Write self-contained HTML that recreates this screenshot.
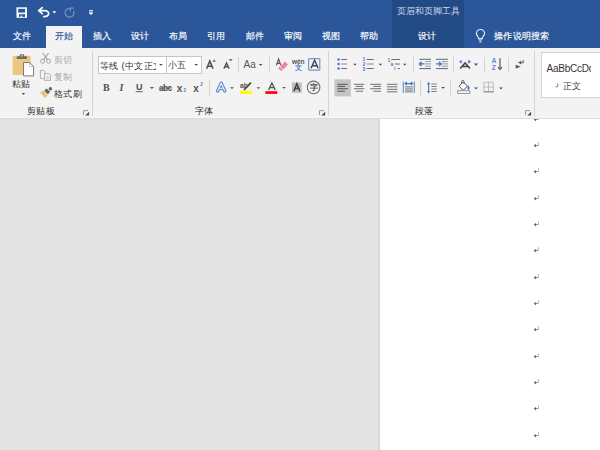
<!DOCTYPE html>
<html><head><meta charset="utf-8">
<style>
html,body{margin:0;padding:0;}
body{width:600px;height:450px;overflow:hidden;position:relative;background:#E4E4E4;font-family:"Liberation Sans",sans-serif;}
.abs{position:absolute;}
.t{position:absolute;white-space:nowrap;line-height:1;font-size:9.4px;letter-spacing:0.3px;font-weight:500;}
.w{-webkit-text-stroke:0.15px currentColor;}
.w{color:#fff;}
#top{left:0;top:0;width:600px;height:48px;background:#2B579A;}
#ctx{left:392px;top:0;width:71.5px;height:48px;background:#224A85;}
#acttab{left:46px;top:26px;width:36px;height:22px;background:#F3F3F3;}
#ribbon{left:0;top:48px;width:600px;height:69px;background:#F3F3F3;}
#rline{left:0;top:117px;width:600px;height:1px;background:#F6F6F6;}
#rline2{left:0;top:118px;width:600px;height:1px;background:#DCDCDC;}
#rline3{left:0;top:119px;width:380px;height:1px;background:#E0E0E0;}
#page{left:380px;top:119px;width:220px;height:331px;background:#fff;}
#pedge{left:378px;top:119px;width:2px;height:331px;background:#D9D9D9;}
.sep{position:absolute;width:1px;background:#D4D4D4;}
.dis{color:#A8A8A8;}
.dk{color:#333;}
.ret{position:absolute;left:533px;width:7px;height:6px;}
</style></head>
<body>
<div id="top" class="abs"></div>
<div id="ctx" class="abs"></div>
<div id="acttab" class="abs"></div>
<div id="ribbon" class="abs"></div>
<div id="rline" class="abs"></div>
<div id="rline2" class="abs"></div>
<div id="rline3" class="abs"></div>
<div id="pedge" class="abs"></div>
<div id="page" class="abs"></div>

<span class="t" style="left:396.5px;top:6.5px;font-size:9px;letter-spacing:0;color:#D0D8E6;">页眉和页脚工具</span>

<span class="t w" style="left:13px;top:31px;">文件</span>
<span class="t" style="left:55px;top:31px;color:#2B579A;-webkit-text-stroke:0.15px currentColor;">开始</span>
<span class="t w" style="left:93px;top:31px;">插入</span>
<span class="t w" style="left:131px;top:31px;">设计</span>
<span class="t w" style="left:169px;top:31px;">布局</span>
<span class="t w" style="left:207px;top:31px;">引用</span>
<span class="t w" style="left:246px;top:31px;">邮件</span>
<span class="t w" style="left:284px;top:31px;">审阅</span>
<span class="t w" style="left:322px;top:31px;">视图</span>
<span class="t w" style="left:360px;top:31px;">帮助</span>
<span class="t w" style="left:418px;top:31px;">设计</span>
<span class="t w" style="left:494px;top:31px;">操作说明搜索</span>

<span class="t dk" style="left:12px;top:79px;">粘贴</span>
<span class="t dis" style="left:54px;top:55px;">剪切</span>
<span class="t dis" style="left:54px;top:72px;">复制</span>
<span class="t dk" style="left:54px;top:89px;">格式刷</span>
<span class="t" style="left:27px;top:106px;color:#2A2A2A;">剪贴板</span>

<div class="abs" style="left:98px;top:56px;width:69px;height:18px;background:#fff;box-sizing:border-box;border:1px solid #C6C6C6;"></div>
<div class="abs" style="left:166px;top:56px;width:36px;height:18px;background:#fff;box-sizing:border-box;border:1px solid #C6C6C6;"></div>
<div class="abs" style="left:99px;top:57px;width:57px;height:16px;overflow:hidden;"><span class="t dk" style="left:1px;top:4px;">等线 (中文正文)</span></div>
<span class="t dk" style="left:168px;top:60px;">小五</span>
<span class="t" style="left:243.6px;top:59.5px;font-family:'Liberation Sans';font-size:10px;font-weight:normal;letter-spacing:0;color:#555;">Aa</span>
<span class="t" style="left:294.6px;top:63.6px;font-size:7px;letter-spacing:0;font-weight:bold;color:#3E7CC4;">文</span>
<span class="t" style="left:103px;top:83px;font-family:'Liberation Serif';font-weight:bold;font-size:10px;color:#505050;letter-spacing:0;">B</span>
<span class="t" style="left:119.5px;top:83px;font-family:'Liberation Serif';font-style:italic;font-weight:bold;font-size:10px;color:#555;letter-spacing:0;">I</span>
<span class="t" style="left:136px;top:83px;font-family:'Liberation Sans';font-weight:bold;font-size:9px;color:#505050;letter-spacing:0;">U</span>
<span class="t" style="left:159px;top:83.5px;font-family:'Liberation Sans';font-weight:bold;font-size:8.4px;color:#4A4A4A;letter-spacing:-0.6px;-webkit-text-stroke:0;">abc</span>
<span class="t" style="left:176.8px;top:83.6px;font-family:'Liberation Sans';font-weight:bold;font-size:10px;letter-spacing:0;color:#555;">x</span>
<span class="t" style="left:183.4px;top:89.2px;font-family:'Liberation Sans';font-weight:bold;font-size:4.6px;letter-spacing:0;color:#3E7CC4;">2</span>
<span class="t" style="left:193.2px;top:83.6px;font-family:'Liberation Sans';font-weight:bold;font-size:10px;letter-spacing:0;color:#555;">x</span>
<span class="t" style="left:200.2px;top:82.6px;font-family:'Liberation Sans';font-weight:bold;font-size:4.6px;letter-spacing:0;color:#3E7CC4;">2</span>
<span class="t" style="left:240px;top:82px;font-family:'Liberation Sans';font-size:7px;font-weight:bold;letter-spacing:-0.2px;color:#555;">ab</span>
<span class="t" style="left:309.6px;top:84.4px;font-size:8px;letter-spacing:0;font-weight:bold;color:#4A4A4A;">字</span>
<span class="t" style="left:195px;top:106px;color:#2A2A2A;">字体</span>

<span class="t" style="left:415px;top:106px;color:#2A2A2A;">段落</span>

<div class="abs" style="left:541px;top:52px;width:70px;height:46px;background:#fff;box-sizing:border-box;border:1px solid #D4D4D4;"></div>
<div class="abs" style="left:542px;top:53px;width:49px;height:30px;overflow:hidden;"><span class="t dk" style="left:4.5px;top:11px;font-size:10px;letter-spacing:-0.25px;font-weight:normal;color:#333;">AaBbCcDd</span></div>
<span class="t" style="left:563px;top:81px;color:#444;">正文</span>

<div class="sep" style="left:92px;top:51px;height:65px;"></div>
<div class="sep" style="left:328px;top:51px;height:65px;"></div>
<div class="sep" style="left:534px;top:51px;height:65px;"></div>
<div class="sep" style="left:238px;top:57px;height:15px;"></div>
<div class="sep" style="left:269px;top:57px;height:15px;"></div>
<div class="sep" style="left:209px;top:80px;height:16px;"></div>
<div class="sep" style="left:413px;top:57px;height:15px;"></div>
<div class="sep" style="left:453px;top:57px;height:15px;"></div>
<div class="sep" style="left:484px;top:57px;height:15px;"></div>
<div class="sep" style="left:508px;top:57px;height:15px;"></div>
<div class="sep" style="left:420px;top:80px;height:16px;"></div>
<div class="sep" style="left:450px;top:80px;height:16px;"></div>
<svg class="abs" style="left:0;top:0;" width="600" height="450" viewBox="0 0 600 450">
<!-- QAT save -->
<rect x="16.5" y="7.4" width="10.5" height="10.4" fill="#fff"/>
<rect x="16.5" y="7.4" width="10.5" height="1.2" fill="#C9D3E4"/>
<rect x="18.2" y="9" width="6.9" height="3.6" fill="#2B579A"/>
<rect x="19" y="14.2" width="6" height="2.7" fill="#2B579A"/>
<rect x="20.6" y="15.6" width="1.6" height="1.4" fill="#fff"/>
<!-- undo -->
<path d="M42.2,7.6 L38.7,10.6 L42.2,13.6 M38.7,10.6 H44.5 A4.2,3 0 0 1 44.5,16.6 H43.8" fill="none" stroke="#fff" stroke-width="1.7" stroke-linejoin="round" stroke-linecap="round"/>
<path d="M52.3,11.2 H56.4 L54.35,13.4 Z" fill="#fff"/>
<!-- redo dim -->
<path d="M70.3,8.4 A4.4,4.4 0 1 0 73.6,11" fill="none" stroke="#7590BD" stroke-width="1.3"/>
<path d="M70.4,11.6 V8.2 H74.1" fill="none" stroke="#7590BD" stroke-width="1.3"/>
<!-- customize -->
<rect x="89" y="10" width="4" height="1" fill="#C9D3E4"/>
<rect x="89" y="11.6" width="4" height="1" fill="#fff"/>
<path d="M89,13 H93 L91,15.1 Z" fill="#fff"/>
<!-- lightbulb -->
<path d="M478.6,38.6 C478.6,36.6 476.4,35.3 476.4,33.6 A4.1,4.1 0 1 1 484.6,33.6 C484.6,35.3 482.3,36.6 482.3,38.6 Z" fill="none" stroke="#E2E8F2" stroke-width="1.2"/>
<path d="M478.8,40 H482 M479.4,41.9 H481.4" fill="none" stroke="#E2E8F2" stroke-width="1.2"/>

<!-- paste icon -->
<rect x="12.7" y="55.7" width="18" height="19.3" rx="1" fill="#EBC67F"/>
<rect x="16.7" y="56.3" width="10.3" height="2.8" rx="0.8" fill="#6E6E6E"/>
<path d="M19.3,56.8 L20.2,54.2 H23.6 L24.5,56.8 Z" fill="#6E6E6E"/>
<rect x="21.2" y="55.2" width="1.4" height="1.2" fill="#E8E8E8"/>
<path d="M23.5,62.5 H29.6 L33.6,66.5 V75.9 H23.5 Z" fill="#fff" stroke="#7A7A7A" stroke-width="1"/>
<path d="M29.6,62.5 V66.5 H33.6" fill="none" stroke="#B0B0B0" stroke-width="0.7"/>
<path d="M21.6,93 H25.2 L23.4,95 Z" fill="#555"/>
<!-- scissors -->
<path d="M42.6,53 L47.6,59.6 M48.6,53 L43.6,59.6" fill="none" stroke="#A3A3A3" stroke-width="1.1"/>
<circle cx="42.6" cy="61.2" r="2" fill="none" stroke="#A3A3A3" stroke-width="1"/>
<circle cx="48.6" cy="61.2" r="2" fill="none" stroke="#A3A3A3" stroke-width="1"/>
<!-- copy -->
<path d="M40.4,70.4 H43.6 L45,71.8 V78.4 H40.4 Z" fill="#F7F4F7" stroke="#A8A8A8" stroke-width="0.9"/>
<path d="M44.6,73.6 H48.8 L50.4,75.2 V80.4 H44.6 Z" fill="#F7F4F7" stroke="#A8A8A8" stroke-width="0.9"/>
<path d="M46,76.6 H48.6 M46,78.6 H49" stroke="#C0B8C0" stroke-width="0.8"/>
<!-- format painter -->
<path d="M40,92.4 L43.6,90.6 L47.6,95.4 L45,98 Z" fill="#EBC27A"/>
<path d="M44.2,90.8 L46.6,88.6 L50.2,91.8 L47.8,94.2 Z" fill="#626262"/>
<circle cx="50.4" cy="88.8" r="1.7" fill="#626262"/>
<!-- launchers -->
<path d="M83.5,115 V110.6 H88.0" fill="none" stroke="#9A9A9A" stroke-width="1"/>
<path d="M89.1,111.8 V115.6 H85.3 Z" fill="#4A4A4A"/>
<path d="M319.5,115 V110.6 H324.0" fill="none" stroke="#9A9A9A" stroke-width="1"/>
<path d="M325.1,111.8 V115.6 H321.3 Z" fill="#4A4A4A"/>
<path d="M525.5,115 V110.6 H530.0" fill="none" stroke="#9A9A9A" stroke-width="1"/>
<path d="M531.1,111.8 V115.6 H527.3 Z" fill="#4A4A4A"/>
<!-- combo carets -->
<path d="M159.2,64 H162.8 L161,65.8 Z" fill="#444"/>
<path d="M194.4,64 H198 L196.2,65.8 Z" fill="#444"/>

<!-- grow / shrink font -->
<path d="M206.6,68.7 L209.8,61 L213,68.7 M207.8,66.3 H211.8" fill="none" stroke="#505050" stroke-width="1.6"/>
<path d="M212.3,61.7 L214.15,59.3 L216,61.7 Z" fill="#3E7CC4"/>
<path d="M223.9,68.7 L226.5,63 L229.1,68.7 M224.9,66.8 H228.1" fill="none" stroke="#505050" stroke-width="1.4"/>
<path d="M228.7,59 H232.7 L230.7,61.4 Z" fill="#3E7CC4"/>
<!-- Aa caret -->
<path d="M258.8,64 H262.5 L260.65,65.8 Z" fill="#444"/>
<!-- clear formatting -->
<path d="M276.4,65.3 L278.6,59 L280.8,65.3 M277.2,63.4 H280" fill="none" stroke="#555" stroke-width="1.1"/>
<path d="M280.2,66.4 L285,61.6 L288,64.6 L283.2,69.4 Z" fill="#E8869C"/>
<path d="M278.2,68.2 L279.6,66.8 L282.6,69.8 L281.2,71.2 Z" fill="#E8869C"/>
<!-- wen -->
<text x="292" y="63.8" font-family="Liberation Sans" font-size="6.6" font-weight="bold" fill="#555" letter-spacing="-0.2">wén</text>
<!-- char border -->
<rect x="308.6" y="58.6" width="11.2" height="11.6" fill="none" stroke="#6B9BD2" stroke-width="1.2" rx="0.6"/>
<path d="M311,68.2 L314.6,60.2 L318.2,68.2 M312.2,65.7 H317" fill="none" stroke="#444" stroke-width="1.4"/>

<!-- row 2 -->
<rect x="135.7" y="91" width="7" height="1.2" fill="#777"/>
<rect x="158.8" y="87.6" width="12.6" height="0.9" fill="#666"/>
<path d="M149.8,87 H154 L151.9,89 Z" fill="#555"/>
<!-- text effects -->
<path d="M217.6,91 L221.2,83.2 L224.8,91 M218.9,88.2 H223.5" fill="none" stroke="#5B8FD0" stroke-width="3.4" stroke-linejoin="round" stroke-linecap="round"/>
<path d="M217.6,91 L221.2,83.2 L224.8,91 M218.9,88.2 H223.5" fill="none" stroke="#F3F3F3" stroke-width="1.1" stroke-linejoin="round" stroke-linecap="round"/>
<circle cx="221.2" cy="86.6" r="0.7" fill="#5B8FD0"/>
<path d="M230,87.3 H234 L232,89 Z" fill="#555"/>
<!-- highlighter -->
<rect x="240" y="90.8" width="12.2" height="3.2" fill="#FFFF00"/>
<path d="M244,89.8 L251,82.6" stroke="#505050" stroke-width="1.9"/>
<path d="M256.6,87.3 H260.3 L258.45,89 Z" fill="#555"/>
<!-- font color -->
<path d="M268.6,90 L271.9,83 L275.2,90 M269.8,87.6 H274" fill="none" stroke="#505050" stroke-width="1.3"/>
<rect x="265.4" y="91.2" width="11.9" height="2.7" fill="#FF0000"/>
<path d="M282.2,87 H286 L284.1,88.8 Z" fill="#555"/>
<!-- shading A -->
<rect x="292" y="82.5" width="9.7" height="10.3" fill="#BFBFBF"/>
<path d="M293.8,91.2 L296.85,83.8 L299.9,91.2 M295,88.6 H298.7" fill="none" stroke="#404040" stroke-width="1.5"/>
<!-- enclosed char -->
<circle cx="313.6" cy="87.4" r="6.3" fill="none" stroke="#6A6A6A" stroke-width="1.1"/>

<!-- paragraph row 1 -->
<g fill="#4A7EBF"><circle cx="338.6" cy="59.5" r="1.3"/><circle cx="338.6" cy="64" r="1.3"/><circle cx="338.6" cy="68.5" r="1.3"/></g>
<path d="M341.2,59.5 H347 M341.2,68.5 H347" stroke="#6A6A6A" stroke-width="1.1"/>
<path d="M341.2,64 H347" stroke="#8F8F8F" stroke-width="1.1"/>
<path d="M353.3,63.7 H356.7 L355,65.4 Z" fill="#444"/>
<path d="M366.7,59.5 H373.6 M366.7,68.5 H373.6" stroke="#6A6A6A" stroke-width="1.1"/>
<path d="M366.7,64 H373.6" stroke="#8F8F8F" stroke-width="1.1"/>
<g font-family="Liberation Sans" font-size="5" font-weight="bold" fill="#4A7EBF"><text x="362.6" y="61.4">1</text><text x="362.6" y="66">2</text><text x="362.6" y="70.6">3</text></g>
<path d="M378.7,63.7 H382.3 L380.5,65.4 Z" fill="#444"/>
<g font-family="Liberation Sans" font-size="5" font-weight="bold" fill="#4A7EBF"><text x="387.4" y="61.8">1</text><text x="390.4" y="65.6">a</text><text x="394" y="70.4">i</text></g>
<path d="M391.4,59.5 H400 M395,64 H399.8 M397.6,68.5 H399.8" stroke="#6A6A6A" stroke-width="1.1"/>
<path d="M403,63.7 H406.4 L404.7,65.4 Z" fill="#444"/>
<!-- indent -->
<path d="M419.3,59.3 H431 M419.3,68.6 H431" stroke="#666" stroke-width="1"/>
<path d="M425.2,61.6 H431 M425.2,63.9 H431 M425.2,66.2 H431" stroke="#9A9A9A" stroke-width="1"/>
<path d="M419.4,63.9 H424.6 M421.6,61.8 L419.4,63.9 L421.6,66" fill="none" stroke="#3E7CC4" stroke-width="1.4"/>
<path d="M435.9,59.3 H447.9 M435.9,68.6 H447.9" stroke="#666" stroke-width="1"/>
<path d="M442,61.6 H447.9 M442,63.9 H447.9 M442,66.2 H447.9" stroke="#9A9A9A" stroke-width="1"/>
<path d="M436,63.9 H441.2 M439,61.8 L441.2,63.9 L439,66" fill="none" stroke="#3E7CC4" stroke-width="1.4"/>
<!-- asian layout -->
<path d="M460.2,68.6 L465.1,62.9 L470,68.6 M461.8,66.5 H468.4" fill="none" stroke="#444" stroke-width="1.5"/>
<path d="M459,61.8 L461.8,59.8 L461.8,63.8 Z M462.6,61.8 L461.4,60.6 V63 Z" fill="#3E7CC4"/>
<path d="M471,61.8 L468.2,59.8 L468.2,63.8 Z" fill="#3E7CC4"/>
<path d="M474,63.4 H478 L476,65.8 Z" fill="#444"/>
<!-- sort -->
<text x="491.6" y="63.4" font-family="Liberation Sans" font-size="6.8" font-weight="bold" fill="#5B8FD0">A</text>
<text x="491.8" y="69.7" font-family="Liberation Sans" font-size="6.8" font-weight="bold" fill="#9B6BC8">Z</text>
<path d="M500,58.2 V69" stroke="#555" stroke-width="1.2"/>
<path d="M498,67 L500,69.6 L502,67" fill="none" stroke="#555" stroke-width="1.2"/>
<!-- show marks -->
<path d="M523.2,60 V62.6 H520" fill="none" stroke="#777" stroke-width="1.2"/>
<path d="M521.2,60.7 L518.1,62.6 L521.2,64.4 Z" fill="#555"/>
<path d="M515.7,64.8 L520.6,66.7 L515.7,68.6 Z" fill="#555"/>
<!-- paragraph row 2 -->
<rect x="334.5" y="79.3" width="16.3" height="17.1" fill="#C5C5C5"/>
<path d="M337.4,84.3 H347.8 M337.4,88.7 H347.8" stroke="#555" stroke-width="1"/>
<path d="M337.4,86.4 H345 M337.4,91.2 H345" stroke="#555" stroke-width="1"/>
<path d="M353.8,84.3 H364.3 M353.8,88.7 H364.3" stroke="#707070" stroke-width="1"/>
<path d="M355.6,86.4 H363 M355.6,91.2 H363" stroke="#707070" stroke-width="1"/>
<path d="M370.2,84.3 H381 M370.2,88.7 H381" stroke="#707070" stroke-width="1"/>
<path d="M373.3,86.4 H381 M373.3,91.2 H381" stroke="#707070" stroke-width="1"/>
<path d="M386.9,84.3 H397.4 M386.9,86.8 H397.4 M386.9,89.3 H397.4 M386.9,91.8 H397.4" stroke="#707070" stroke-width="1"/>
<path d="M403.3,81.6 V92.9 M414.3,81.6 V92.9" stroke="#5B8FD0" stroke-width="1.1"/>
<path d="M405.2,83.6 H412.4 M406.8,82 L405,83.6 L406.8,85.2 M410.8,82 L412.6,83.6 L410.8,85.2" fill="none" stroke="#3E7CC4" stroke-width="1.1"/>
<rect x="405" y="86" width="7.8" height="6.6" fill="#A5A5A5"/>
<path d="M405,87.6 H412.8 M405,89.8 H412.8" stroke="#D0D0D0" stroke-width="0.6"/>
<!-- line spacing -->
<path d="M428.6,82.6 V92.8" stroke="#3E7CC4" stroke-width="1.1"/>
<path d="M426.9,84.4 L428.6,82 L430.3,84.4 Z M426.9,91 L428.6,93.4 L430.3,91 Z" fill="#3E7CC4"/>
<path d="M431.4,84 H436.8 M431.4,86.5 H436.8 M431.4,89 H436.8 M431.4,91.5 H436.8" stroke="#808080" stroke-width="1"/>
<path d="M441.3,87 H445 L443.15,88.8 Z" fill="#444"/>
<!-- shading bucket -->
<path d="M459,86.2 L463.2,82 L467.4,86.2 L463.2,90.4 Z" fill="#fff" stroke="#555" stroke-width="1"/>
<path d="M461.6,83.2 V81.6 A1.2,1.2 0 0 1 464,81.6 V84" fill="none" stroke="#555" stroke-width="0.9"/>
<path d="M467.8,85 C469.6,86.4 470.2,88 469.2,89.4 C468.4,90.4 467.2,89.6 467.6,88.2 Z" fill="#3E7CC4"/>
<rect x="457.8" y="90.8" width="12" height="2.5" fill="#fff" stroke="#777" stroke-width="0.8"/>
<path d="M474,87.5 H478 L476,89.2 Z" fill="#444"/>
<!-- borders -->
<path d="M483.8,82.3 H493.3 V91.8 H483.8 Z M488.55,82.3 V91.8 M483.8,87.05 H493.3" fill="none" stroke="#B8B8B8" stroke-width="0.9"/>
<path d="M483.6,91.8 H493.5" stroke="#888" stroke-width="1"/>
<path d="M499,87.5 H503 L501,89.2 Z" fill="#444"/>
<!-- styles hook -->
<path d="M557.8,83.6 V85.6 A1.2,1.2 0 0 1 556.6,86.8 H555.6" fill="none" stroke="#555" stroke-width="0.9"/>
</svg>
<div class="abs" style="left:520px;top:119px;width:30px;height:331px;overflow:hidden;">
<svg class="abs" style="left:13px;top:-3.3px" width="7" height="7" viewBox="0 0 7 7"><path d="M5.4,0.2 V3.4" stroke="#B5B5B5" stroke-width="1"/><path d="M5.4,3.6 H2" stroke="#8A8A8A" stroke-width="1"/><path d="M3,2 L0.6,3.6 L3,5.4 Z" fill="#6A6A6A"/></svg>
<svg class="abs" style="left:13px;top:23.0px" width="7" height="7" viewBox="0 0 7 7"><path d="M5.4,0.2 V3.4" stroke="#B5B5B5" stroke-width="1"/><path d="M5.4,3.6 H2" stroke="#8A8A8A" stroke-width="1"/><path d="M3,2 L0.6,3.6 L3,5.4 Z" fill="#6A6A6A"/></svg>
<svg class="abs" style="left:13px;top:49.4px" width="7" height="7" viewBox="0 0 7 7"><path d="M5.4,0.2 V3.4" stroke="#B5B5B5" stroke-width="1"/><path d="M5.4,3.6 H2" stroke="#8A8A8A" stroke-width="1"/><path d="M3,2 L0.6,3.6 L3,5.4 Z" fill="#6A6A6A"/></svg>
<svg class="abs" style="left:13px;top:75.7px" width="7" height="7" viewBox="0 0 7 7"><path d="M5.4,0.2 V3.4" stroke="#B5B5B5" stroke-width="1"/><path d="M5.4,3.6 H2" stroke="#8A8A8A" stroke-width="1"/><path d="M3,2 L0.6,3.6 L3,5.4 Z" fill="#6A6A6A"/></svg>
<svg class="abs" style="left:13px;top:102.1px" width="7" height="7" viewBox="0 0 7 7"><path d="M5.4,0.2 V3.4" stroke="#B5B5B5" stroke-width="1"/><path d="M5.4,3.6 H2" stroke="#8A8A8A" stroke-width="1"/><path d="M3,2 L0.6,3.6 L3,5.4 Z" fill="#6A6A6A"/></svg>
<svg class="abs" style="left:13px;top:128.4px" width="7" height="7" viewBox="0 0 7 7"><path d="M5.4,0.2 V3.4" stroke="#B5B5B5" stroke-width="1"/><path d="M5.4,3.6 H2" stroke="#8A8A8A" stroke-width="1"/><path d="M3,2 L0.6,3.6 L3,5.4 Z" fill="#6A6A6A"/></svg>
<svg class="abs" style="left:13px;top:154.7px" width="7" height="7" viewBox="0 0 7 7"><path d="M5.4,0.2 V3.4" stroke="#B5B5B5" stroke-width="1"/><path d="M5.4,3.6 H2" stroke="#8A8A8A" stroke-width="1"/><path d="M3,2 L0.6,3.6 L3,5.4 Z" fill="#6A6A6A"/></svg>
<svg class="abs" style="left:13px;top:181.1px" width="7" height="7" viewBox="0 0 7 7"><path d="M5.4,0.2 V3.4" stroke="#B5B5B5" stroke-width="1"/><path d="M5.4,3.6 H2" stroke="#8A8A8A" stroke-width="1"/><path d="M3,2 L0.6,3.6 L3,5.4 Z" fill="#6A6A6A"/></svg>
<svg class="abs" style="left:13px;top:207.4px" width="7" height="7" viewBox="0 0 7 7"><path d="M5.4,0.2 V3.4" stroke="#B5B5B5" stroke-width="1"/><path d="M5.4,3.6 H2" stroke="#8A8A8A" stroke-width="1"/><path d="M3,2 L0.6,3.6 L3,5.4 Z" fill="#6A6A6A"/></svg>
<svg class="abs" style="left:13px;top:233.8px" width="7" height="7" viewBox="0 0 7 7"><path d="M5.4,0.2 V3.4" stroke="#B5B5B5" stroke-width="1"/><path d="M5.4,3.6 H2" stroke="#8A8A8A" stroke-width="1"/><path d="M3,2 L0.6,3.6 L3,5.4 Z" fill="#6A6A6A"/></svg>
<svg class="abs" style="left:13px;top:260.1px" width="7" height="7" viewBox="0 0 7 7"><path d="M5.4,0.2 V3.4" stroke="#B5B5B5" stroke-width="1"/><path d="M5.4,3.6 H2" stroke="#8A8A8A" stroke-width="1"/><path d="M3,2 L0.6,3.6 L3,5.4 Z" fill="#6A6A6A"/></svg>
<svg class="abs" style="left:13px;top:286.4px" width="7" height="7" viewBox="0 0 7 7"><path d="M5.4,0.2 V3.4" stroke="#B5B5B5" stroke-width="1"/><path d="M5.4,3.6 H2" stroke="#8A8A8A" stroke-width="1"/><path d="M3,2 L0.6,3.6 L3,5.4 Z" fill="#6A6A6A"/></svg>
<svg class="abs" style="left:13px;top:312.8px" width="7" height="7" viewBox="0 0 7 7"><path d="M5.4,0.2 V3.4" stroke="#B5B5B5" stroke-width="1"/><path d="M5.4,3.6 H2" stroke="#8A8A8A" stroke-width="1"/><path d="M3,2 L0.6,3.6 L3,5.4 Z" fill="#6A6A6A"/></svg>
</div>
</body></html>
